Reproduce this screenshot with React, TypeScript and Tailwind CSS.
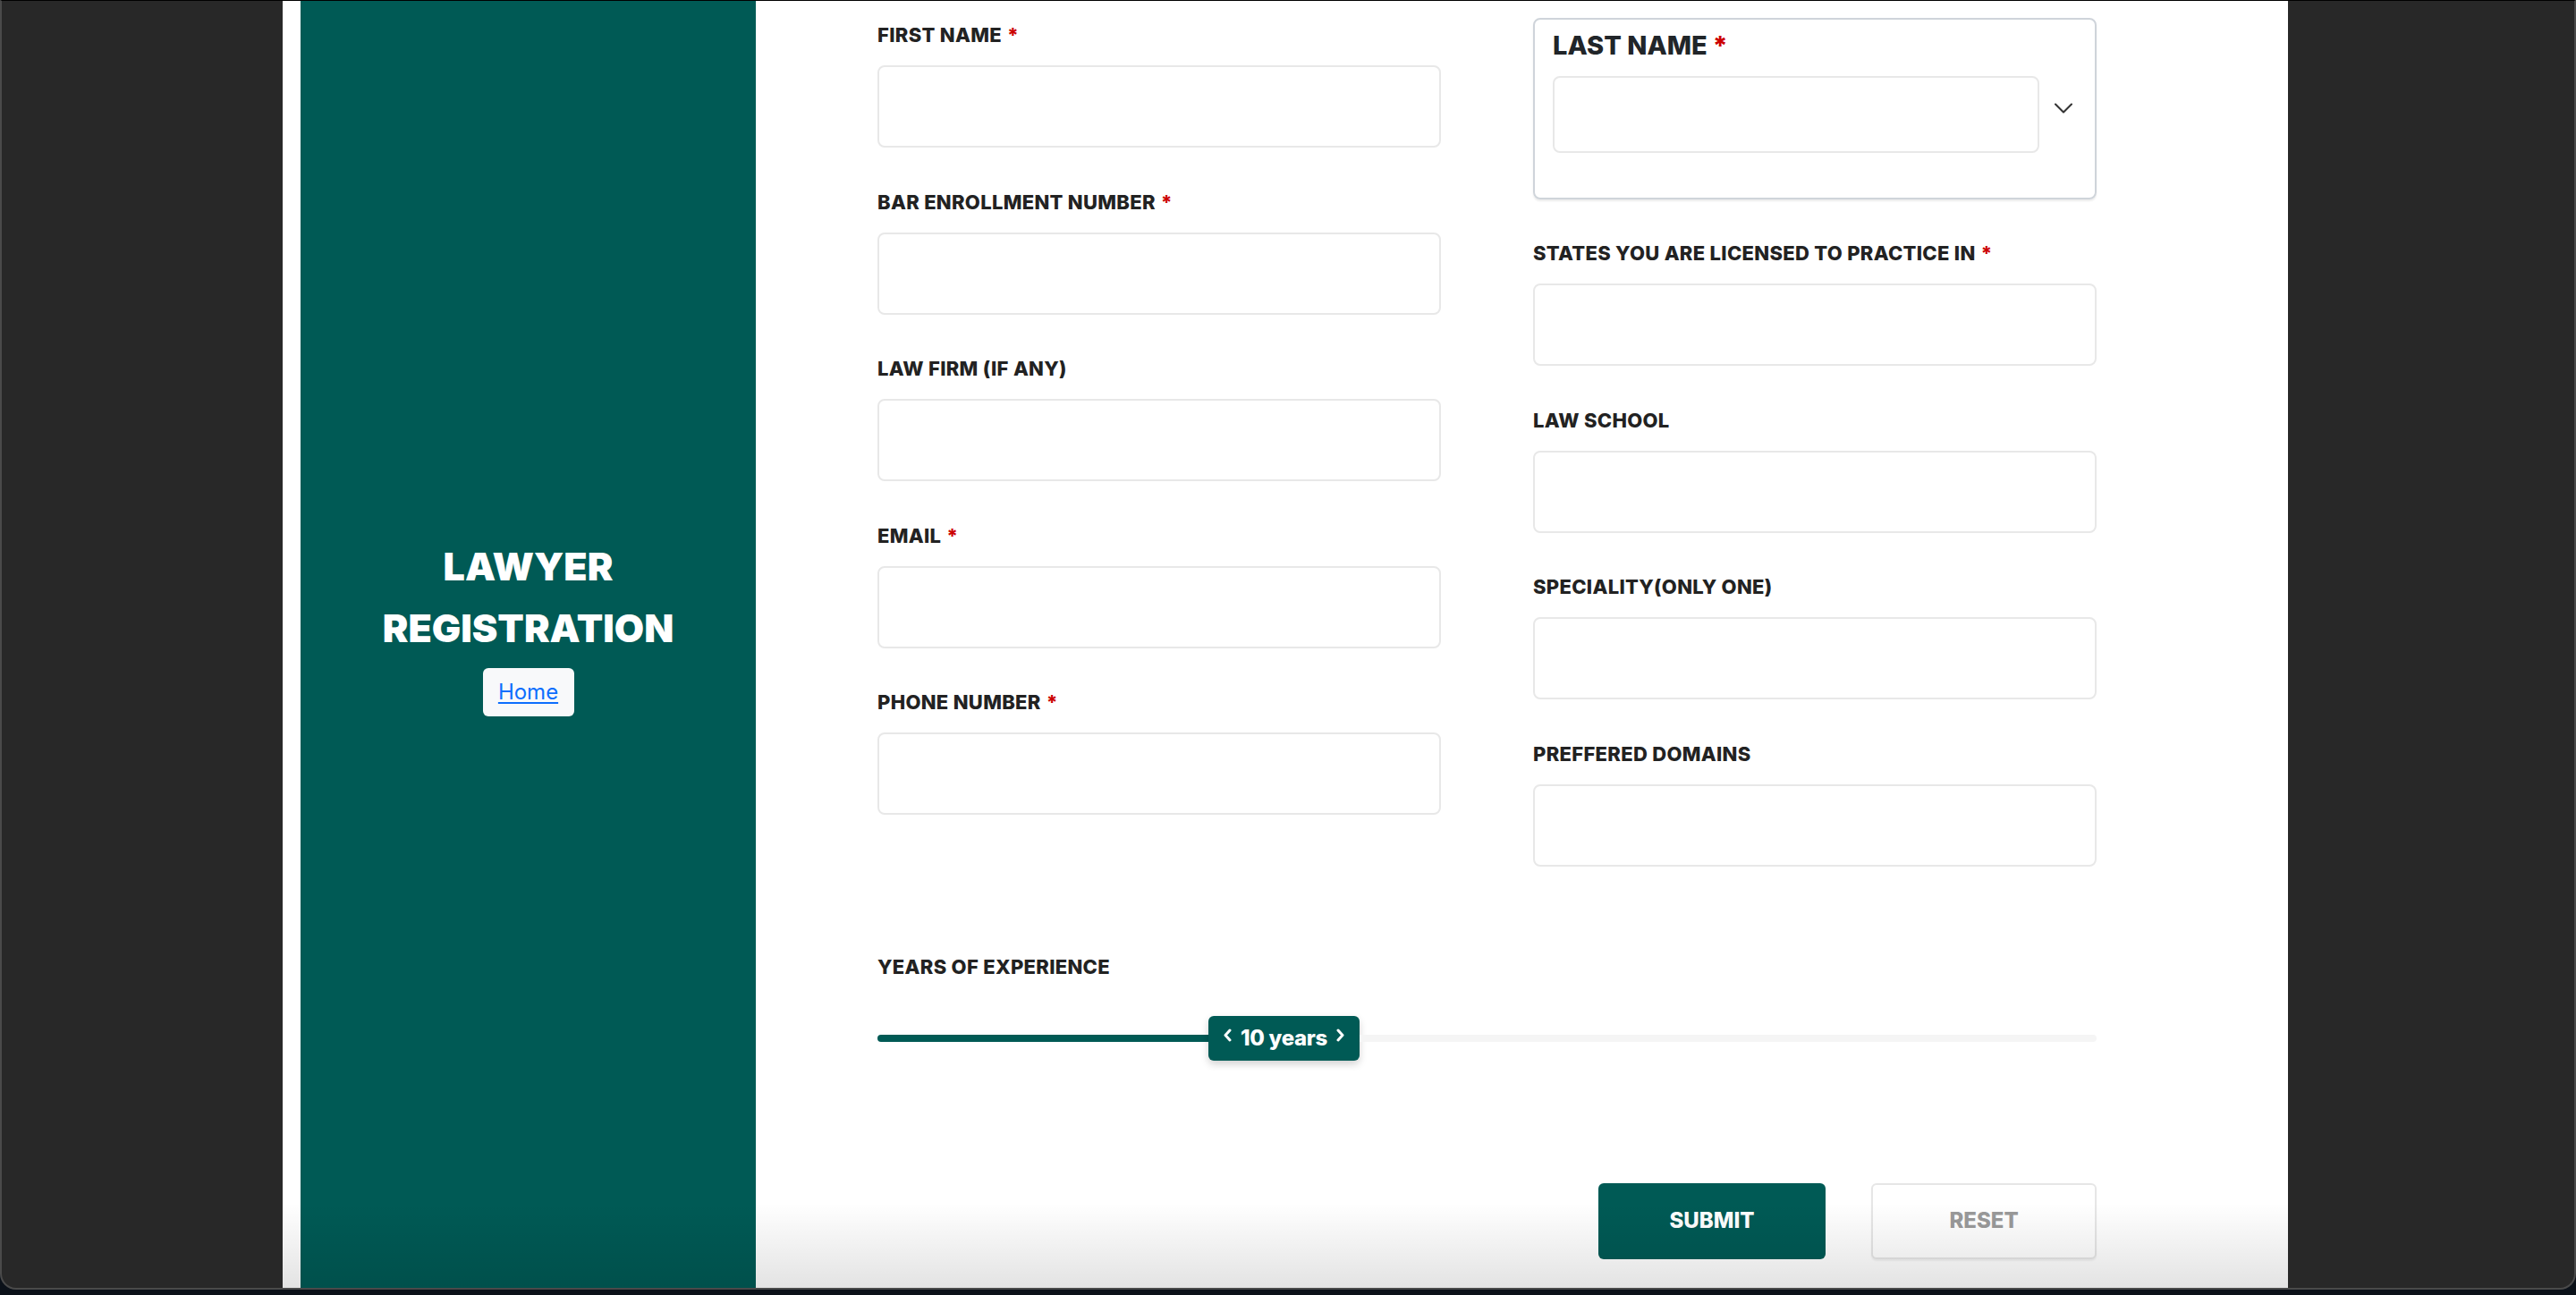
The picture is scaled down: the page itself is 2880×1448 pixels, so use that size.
import React from "react";
import { ChevronDown } from "lucide-react";

const TEAL = "bg-[#005a55]";

function Label({ text, required }: { text: string; required?: boolean }) {
    return (
        <div className="h-[22px] flex items-start text-[22px] leading-[22px] font-extrabold text-[#222222] tracking-[0.3px]">
            <span>{text}</span>
            {required && <span className="ml-[6px] text-[#cc0000]">*</span>}
        </div>
    );
}

function Field({ label, required }: { label: string; required?: boolean }) {
    return (
        <div className="flex flex-col">
            <Label text={label} required={required} />
            <input
                type="text"
                className="mt-[23px] h-[92px] w-full rounded-[8px] border-2 border-[#e8e8e8] bg-white outline-none"
            />
        </div>
    );
}

function Chevron({ dir }: { dir: "left" | "right" }) {
    return (
        <svg width="9" height="15" viewBox="0 0 9 15" className="mb-[7px] shrink-0">
            <path
                d={dir === "left" ? "M7 2 L2 7.5 L7 13" : "M2 2 L7 7.5 L2 13"}
                fill="none"
                stroke="white"
                strokeWidth="3"
                strokeLinecap="round"
                strokeLinejoin="round"
            />
        </svg>
    );
}

export default function App() {
    return (
        <div className="relative w-[2880px] h-[1448px] overflow-hidden bg-[#0b1119] font-[Inter,sans-serif]">
            {/* window frame */}
            <div className="h-[1442px] flex pl-[314px] bg-[#282828] rounded-b-[18px] border-x-2 border-b-2 border-[#4a4a4a] border-t border-t-black overflow-hidden">
                <div className="relative w-[2242px] h-full flex bg-white pl-[20px]">
                    {/* sidebar */}
                    <aside className={`w-[509px] h-full ${TEAL} flex flex-col items-center justify-center pb-[42px]`}>
                        <h1 className="text-center text-white font-black text-[43px] leading-[69px]">
                            LAWYER
                            <br />
                            REGISTRATION
                        </h1>
                        <a
                            href="#"
                            className="mt-[10px] w-[102px] h-[54px] flex items-center justify-center rounded-[6px] bg-[#f8f9fa] text-[24px] text-[#0d6efd] underline underline-offset-[3px]"
                        >
                            Home
                        </a>
                    </aside>

                    {/* form */}
                    <main className="flex-1 pl-[136px]">
                        <div className="w-[1363px]">
                            <div className="grid grid-cols-[630px_630px] gap-x-[103px] items-start">
                                <div className="flex flex-col gap-[49.5px] pt-[27px]">
                                    <Field label="FIRST NAME" required />
                                    <Field label="BAR ENROLLMENT NUMBER" required />
                                    <Field label="LAW FIRM (IF ANY)" />
                                    <Field label="EMAIL" required />
                                    <Field label="PHONE NUMBER" required />
                                </div>
                                <div className="flex flex-col gap-[49.5px] pt-[19px]">
                                    <div className="h-[202.5px] rounded-[8px] border-2 border-[#cfd4da] shadow-[0_2px_2px_rgba(0,0,0,0.08)] pl-[20px] pt-[14px]">
                                        <div className="h-[29px] flex items-start text-[29px] leading-[29px] font-extrabold text-[#212529]">
                                            <span>LAST NAME</span>
                                            <span className="ml-[6px] text-[#cc0000]">*</span>
                                        </div>
                                        <div className="mt-[20px] flex items-center">
                                            <input
                                                type="text"
                                                className="shrink-0 w-[544px] h-[86px] rounded-[8px] border-2 border-[#e8e8e8] bg-white outline-none"
                                            />
                                            <ChevronDown size={36} strokeWidth={1.4} className="shrink-0 ml-[9px] mb-[14px] text-[#333333]" />
                                        </div>
                                    </div>
                                    <Field label="STATES YOU ARE LICENSED TO PRACTICE IN" required />
                                    <Field label="LAW SCHOOL" />
                                    <Field label="SPECIALITY(ONLY ONE)" />
                                    <Field label="PREFFERED DOMAINS" />
                                </div>
                            </div>

                            {/* years of experience */}
                            <div className="mt-[101px]">
                                <Label text="YEARS OF EXPERIENCE" />
                                <div className="mt-[44px] h-[50px] flex items-center">
                                    <div className={`w-[370px] h-[8px] rounded-l-full ${TEAL}`} />
                                    <div className={`w-[169px] h-[50px] rounded-[6px] ${TEAL} shadow-[0_4px_8px_rgba(0,0,0,0.18)] flex items-center justify-center gap-[10px]`}>
                                        <Chevron dir="left" />
                                        <span className="text-white font-extrabold text-[24px] leading-none tracking-[-0.3px]">10 years</span>
                                        <Chevron dir="right" />
                                    </div>
                                    <div className="flex-1 h-[8px] rounded-r-full bg-[#f5f5f5]" />
                                </div>
                            </div>

                            {/* actions */}
                            <div className="mt-[137px] flex justify-end gap-[51px]">
                                <button className={`w-[254px] h-[85px] rounded-[6px] ${TEAL} text-white font-extrabold text-[24px]`}>
                                    SUBMIT
                                </button>
                                <button className="w-[252px] h-[85px] rounded-[6px] border-2 border-[#e6e6e6] bg-white text-[#9a9a9a] font-extrabold text-[24px] shadow-[0_2px_2px_rgba(0,0,0,0.06)]">
                                    RESET
                                </button>
                            </div>
                        </div>
                    </main>

                    {/* bottom fade */}
                    <div className="pointer-events-none absolute inset-x-0 bottom-0 h-[95px] bg-gradient-to-b from-transparent to-black/[0.11]" />
                </div>
            </div>
        </div>
    );
}
